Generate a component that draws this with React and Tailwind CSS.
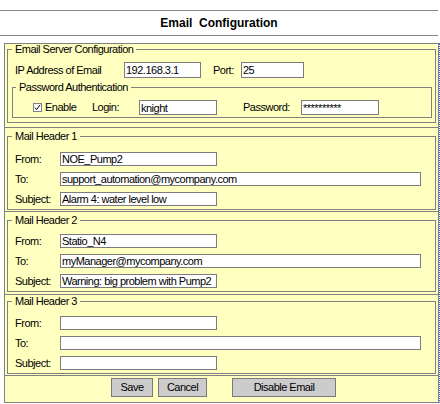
import React from "react";

const inputCls =
  "h-full bg-white border border-[#7c7c7c] px-[1px] py-0 leading-[12px] outline-none text-black";

function Field({ w, value }) {
  return (
    <input
      type="text"
      readOnly
      defaultValue={value}
      className={inputCls + " " + w}
    />
  );
}

function MailHeader({ n, from, to, subject, cellCls, mtCls, pbCls }) {
  return (
    <div className={cellCls}>
      <fieldset className={"border border-[#808080] " + pbCls}>
        <legend className="ml-[4px] px-[3px] leading-[11px]">Mail Header {n}</legend>
        <div className={"flex flex-col gap-[6px] ml-[7px] " + mtCls}>
          <div className="flex items-center h-[14px]">
            <span className="w-[45px]">From:</span>
            <Field w="w-[157px]" value={from} />
          </div>
          <div className="flex items-center h-[14px]">
            <span className="w-[45px]">To:</span>
            <Field w="w-[361px]" value={to} />
          </div>
          <div className="flex items-center h-[14px]">
            <span className="w-[45px]">Subject:</span>
            <Field w="w-[157px]" value={subject} />
          </div>
        </div>
      </fieldset>
    </div>
  );
}

export default function App() {
  return (
    <div className="w-[440px] h-[404px] bg-white text-black font-['Liberation_Sans',Arial,sans-serif] text-[11px] tracking-[-0.5px] overflow-hidden">
      <div className="pt-[10px]">
        <div className="h-px w-[438px] bg-[#8a8a8a]" />
        <div className="h-[24px] w-[438px] flex items-center justify-center font-bold text-[12px] tracking-normal whitespace-pre">
          Email  Configuration
        </div>
        <div className="h-px w-[438px] bg-[#8a8a8a]" />
      </div>

      <div className="flex mt-[7px] ml-[4px]">
        <div className="w-[435px] border border-[#808080] bg-[#ffffc0] flex flex-col">
          {/* Email server configuration */}
          <div className="h-[84px] border-b border-[#808080] px-[2px]">
            <fieldset className="border border-[#808080]">
              <legend className="ml-[4px] px-[3px] leading-[11px]">Email Server Configuration</legend>
              <div className="flex items-center h-[16px] mt-[7px] ml-[7px]">
                <span className="w-[109px]">IP Address of Email</span>
                <Field w="w-[77px]" value="192.168.3.1" />
                <span className="ml-[12px] w-[28px]">Port:</span>
                <Field w="w-[63px]" value="25" />
              </div>
              <fieldset className="mt-[4px] ml-[4px] mr-[3px] mb-[4px] border border-[#808080]">
                <legend className="ml-[3px] px-[3px] leading-[11px]">Password Authentication</legend>
                <div className="flex items-center h-[15px] mt-[7px] mb-[2px] pl-[20px]">
                  <div className="w-[59px] flex items-center">
                    <span className="w-[9px] h-[9px] bg-white border border-[#808080] flex items-center justify-center">
                      <svg width="7" height="7" viewBox="0 0 7 7">
                        <path d="M0.8 3.6 L2.6 5.6 L6.2 0.8" fill="none" stroke="#000" strokeWidth="1" />
                      </svg>
                    </span>
                    <span className="ml-[3px]">Enable</span>
                  </div>
                  <span className="w-[47px]">Login:</span>
                  <Field w="w-[78px]" value="knight" />
                  <span className="ml-[26px] w-[58px]">Password:</span>
                  <Field w="w-[78px]" value="**********" />
                </div>
              </fieldset>
            </fieldset>
          </div>

          <MailHeader
            n={1}
            from="NOE_Pump2"
            to="support_automation@mycompany.com"
            subject="Alarm 4: water level low"
            cellCls="h-[84px] border-b border-[#808080] px-[2px] pt-[3px]"
            mtCls="mt-[10px]"
            pbCls="pb-[3px]"
          />
          <MailHeader
            n={2}
            from="Statio_N4"
            to="myManager@mycompany.com"
            subject="Warning: big problem with Pump2"
            cellCls="h-[83px] border-b border-[#808080] px-[2px] pt-[3px]"
            mtCls="mt-[8px]"
            pbCls="pb-[3px]"
          />
          <MailHeader
            n={3}
            from=""
            to=""
            subject=""
            cellCls="h-[81px] border-b border-[#808080] px-[2px] pt-[1px]"
            mtCls="mt-[9px]"
            pbCls="pb-[3px]"
          />

          <div className="h-[26px] flex items-start pt-[2px] pl-[106px]">
            <button className="w-[42px] h-[19px] bg-[#cccccc] border border-[#7a7a7a]">Save</button>
            <button className="ml-[5px] w-[49px] h-[19px] bg-[#cccccc] border border-[#7a7a7a]">Cancel</button>
            <button className="ml-[25px] w-[104px] h-[19px] bg-[#cccccc] border border-[#7a7a7a]">Disable Email</button>
          </div>
        </div>
        <div className="w-px border-l border-dotted border-[#4262d0]" />
      </div>
    </div>
  );
}
